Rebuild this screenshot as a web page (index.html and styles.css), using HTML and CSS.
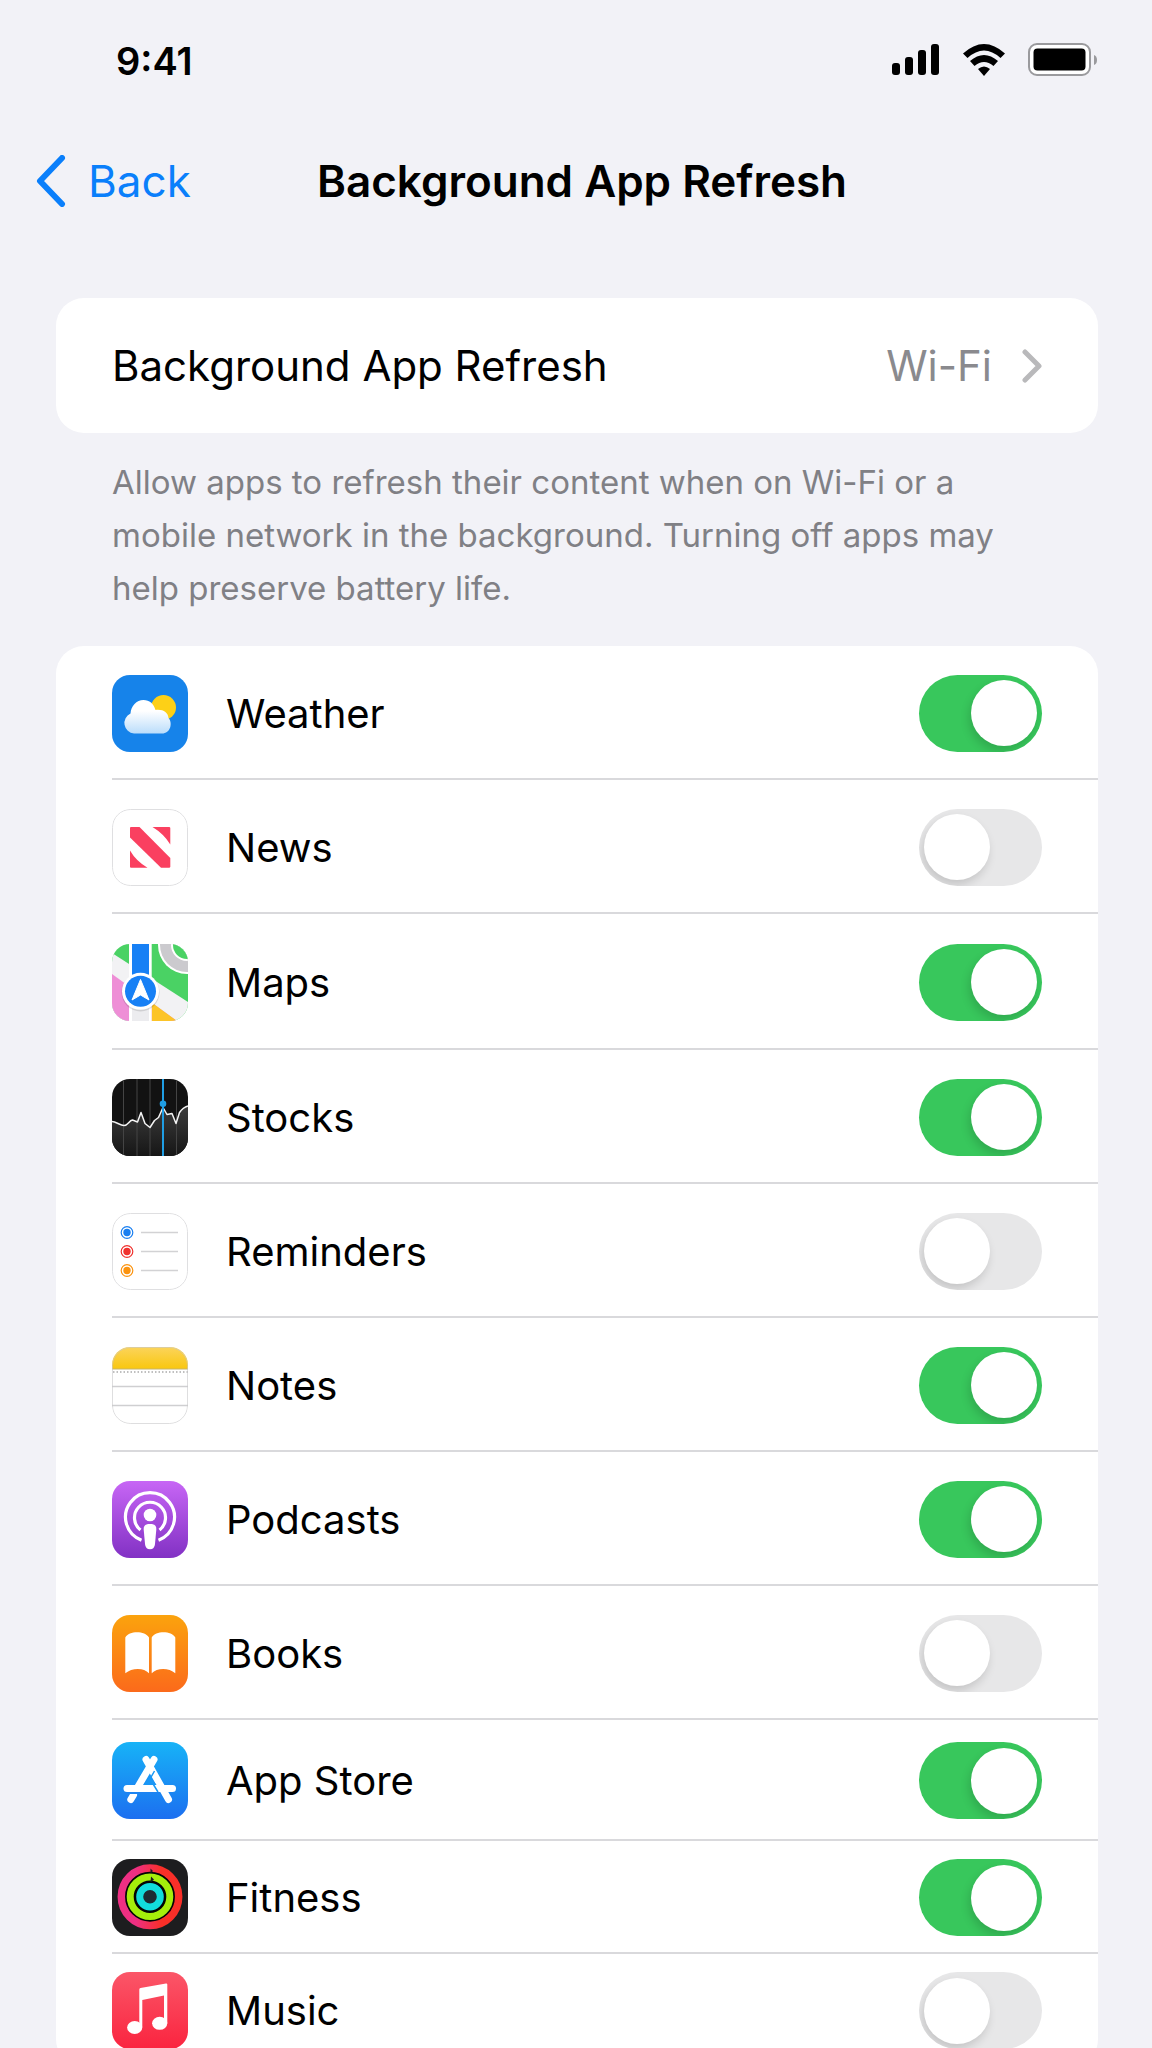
FILE: index.html
```html
<!DOCTYPE html>
<html lang="en">
<head>
<meta charset="utf-8">
<meta name="viewport" content="width=device-width, initial-scale=1">
<title>Background App Refresh</title>
<link rel="stylesheet" href="styles.css">
</head>
<body>
<div class="screen">
  <div class="status">
    <span class="status-time">9:41</span>
    <div class="status-icons">
      <svg width="48" height="32" viewBox="0 0 48 32" aria-hidden="true"><rect x="0" y="19" width="8" height="12" rx="3"/><rect x="13" y="13" width="8" height="18" rx="3"/><rect x="26" y="6" width="8" height="25" rx="3"/><rect x="39" y="0" width="8" height="31" rx="3"/></svg>
      <svg width="42" height="32" viewBox="0 0 42 32" aria-hidden="true"><path d="M0 9.500Q21-9.500 42 9.500L37.500 14Q21-1 4.500 14Z"/><path d="M7 17Q21 5 35 17L30.500 22Q21 14 11.500 22Z"/><path d="M15 25Q21 20 27 25L21 32Z"/></svg>
      <svg width="70" height="34" viewBox="0 0 70 34" aria-hidden="true"><rect x="1" y="1" width="61" height="31" rx="8" fill="#fff" stroke="#9a9a9d" stroke-width="2"/><rect x="5.500" y="5.500" width="52" height="22" rx="4"/><path d="M66 12q3 1 3 5t-3 5z" fill="#9a9a9d"/></svg>
    </div>
  </div>

  <header class="nav">
    <a class="nav-back" href="#">
      <svg width="30" height="52" viewBox="0 0 30 52" aria-hidden="true"><path d="M26 3L4 26 26 49" fill="none" stroke="currentColor" stroke-width="6" stroke-linecap="round" stroke-linejoin="round"/></svg>
      <span>Back</span>
    </a>
    <h1 class="nav-title">Background App Refresh</h1>
  </header>

  <main class="content">
    <section class="card">
      <button class="link-row" type="button">
        <span>Background App Refresh</span>
        <span class="link-value">Wi-Fi</span>
        <svg width="20" height="34" viewBox="0 0 20 34" aria-hidden="true"><path d="M3 3L17 17 3 31" fill="none" stroke="#b9b9bb" stroke-width="5" stroke-linecap="round" stroke-linejoin="round"/></svg>
      </button>
    </section>
    <p class="note">Allow apps to refresh their content when on Wi-Fi or a mobile network in the background. Turning off apps may help preserve battery life.</p>

    <section class="card">
      <label class="row">
        <svg class="app-icon" viewBox="0 0 76 77" aria-hidden="true">
          <defs><linearGradient id="cloud" gradientUnits="userSpaceOnUse" x1="0" y1="36" x2="0" y2="59"><stop offset="0" stop-color="#fff"/><stop offset="1" stop-color="#b9dcfb"/></linearGradient></defs>
          <rect width="76" height="77" fill="#1683ea"/><circle cx="51.500" cy="32.500" r="12.500" fill="#fdd017"/>
          <path fill="url(#cloud)" d="M22 58.500A10.500 10.500 0 0 1 18.500 38.500C19 31 24.500 25 31.500 25 37.500 25 41.500 28.500 43.500 35 51 34 56 37.500 56.500 43 61 48 58.500 58.500 50 58.500Z"/>
        </svg>
        <span class="row-body"><span>Weather</span><input class="switch" type="checkbox" role="switch" checked></span>
      </label>
      <label class="row">
        <svg class="app-icon" viewBox="0 0 76 77" aria-hidden="true">
          <rect x=".5" y=".5" width="75" height="76" rx="18" fill="#fff" stroke="#dfdfe1"/>
          <g fill="#fa4060"><path d="M19 18H27.500L58.300 49V57.500Q58.300 58.700 57 58.700H49L18 28.500V19Q18 18 19 18Z"/><path d="M40.500 18H57Q58.300 18 58.300 19V35.500Q52 25 40.500 18Z"/><path d="M18 41.500V57.500Q18 58.700 19 58.700H35.500Q24 52 18 41.500Z"/></g>
        </svg>
        <span class="row-body"><span>News</span><input class="switch" type="checkbox" role="switch"></span>
      </label>
      <label class="row row-large">
        <svg class="app-icon" viewBox="0 0 76 77" aria-hidden="true">
          <rect width="76" height="77" fill="#4ad264"/>
          <circle cx="75" cy="1" r="29" fill="#fff"/><circle cx="75" cy="1" r="27" fill="#cbcace"/><circle cx="75" cy="1" r="16" fill="#fff"/><circle cx="75" cy="1" r="14" fill="#4ad264"/>
          <path d="M0 9L76 58V77H0Z" fill="#f2f2f4"/><path d="M0 30L65 77H0Z" fill="#ee8ed6"/><path d="M39.700 58.500L65 77H39.700Z" fill="#fcc428"/>
          <path d="M17 0H39.700V77H17Z" fill="#fff"/><path d="M20 50H37V77H20Z" fill="#ececef"/><path d="M20 0H37V40H20Z" fill="#1780f5"/>
          <circle cx="28.500" cy="48.500" r="19" fill="#000" opacity=".12"/><circle cx="28.500" cy="47.300" r="18.500" fill="#fff"/><circle cx="28.500" cy="47.300" r="15.500" fill="#1780f5"/>
          <path d="M28.500 35.500L37 56 28.500 51 20 56Z" fill="#fff" stroke="#fff" stroke-linejoin="round"/>
        </svg>
        <span class="row-body"><span>Maps</span><input class="switch" type="checkbox" role="switch" checked></span>
      </label>
      <label class="row">
        <svg class="app-icon" viewBox="0 0 76 77" aria-hidden="true">
          <defs><linearGradient id="chart" x2="0" y2="1"><stop offset="0" stop-color="#3c3c3c"/><stop offset="1" stop-color="#161616"/></linearGradient></defs>
          <rect width="76" height="77" fill="#121212"/>
          <path d="M0 42.500L12 46.500 20.500 41 25.500 43 29 33.500 33 44.500 38 48.500 42.500 41.500 46.500 38.500 51 28.500 55 35.500 60 34.500 64 44.500 67.500 33.500 76 27V77H0Z" fill="url(#chart)"/>
          <path d="M11.500 0V77M25 0V77M38 0V77M64.500 0V77" stroke="#444"/>
          <path d="M0 42.500C4 42.500 8 46.500 12 46.500S17 41.500 20.500 41L25.500 43 29 33.500 33 44.500 38 48.500 42.500 41.500 46.500 38.500 51 28.500 55 35.500 60 34.500 64 44.500 67.500 33.500Q71 28.500 76 27" fill="none" stroke="#f4f4f4" stroke-width="1.500" stroke-linejoin="round"/>
          <path d="M51 0V77" stroke="#1f9ee4" stroke-width="2"/><circle cx="51" cy="24.700" r="3.300" fill="#1f9ee4"/>
        </svg>
        <span class="row-body"><span>Stocks</span><input class="switch" type="checkbox" role="switch" checked></span>
      </label>
      <label class="row">
        <svg class="app-icon" viewBox="0 0 76 77" aria-hidden="true">
          <rect x=".5" y=".5" width="75" height="76" rx="18" fill="#fff" stroke="#dfdfe1"/>
          <g fill="none" stroke-width="1.200"><circle cx="15" cy="19.500" r="5.800" stroke="#1a7ff0"/><circle cx="15" cy="38.500" r="5.800" stroke="#f0322e"/><circle cx="15" cy="57.500" r="5.800" stroke="#fb930f"/></g>
          <circle cx="15" cy="19.500" r="3.700" fill="#1a7ff0"/><circle cx="15" cy="38.500" r="3.700" fill="#f0322e"/><circle cx="15" cy="57.500" r="3.700" fill="#fb930f"/>
          <path d="M29 19.500H66M29 38.500H66M29 57.500H66" stroke="#d2d2d4" stroke-width="1.500"/>
        </svg>
        <span class="row-body"><span>Reminders</span><input class="switch" type="checkbox" role="switch"></span>
      </label>
      <label class="row">
        <svg class="app-icon" viewBox="0 0 76 77" aria-hidden="true">
          <defs><linearGradient id="pad" x2="0" y2="1"><stop offset="0" stop-color="#fbd45c"/><stop offset="1" stop-color="#f9c70f"/></linearGradient></defs>
          <rect width="76" height="77" fill="#fff"/><rect width="76" height="22" fill="url(#pad)"/>
          <path d="M0 22H76" stroke="#c8b468"/><path d="M1 25H76" stroke="#aaa" stroke-width="1.500" stroke-dasharray="1.500 2"/>
          <path d="M0 39.500H76M0 58.500H76" stroke="#cfcfd1" stroke-width="1.300"/><rect x=".5" y=".5" width="75" height="76" rx="18" fill="none" stroke="#c8c8ca" stroke-opacity=".6"/>
        </svg>
        <span class="row-body"><span>Notes</span><input class="switch" type="checkbox" role="switch" checked></span>
      </label>
      <label class="row">
        <svg class="app-icon" viewBox="0 0 76 77" aria-hidden="true">
          <defs><linearGradient id="podcast" x2="0" y2="1"><stop offset="0" stop-color="#c766f5"/><stop offset="1" stop-color="#8231c4"/></linearGradient></defs>
          <rect width="76" height="77" fill="url(#podcast)"/>
          <g fill="none" stroke="#fff" stroke-width="3.200"><path d="M29.500 59.200A24.500 24.500 0 1 1 46.500 59.200"/><path d="M28.500 49A15.500 15.500 0 1 1 47.500 49"/></g>
          <circle cx="38" cy="34" r="6.300" fill="#fff"/><path d="M38 43C42.500 43 44.500 44.500 44.300 48.500L43 63Q42.500 68.300 38 68.300T33 63L31.700 48.500C31.500 44.500 33.500 43 38 43Z" fill="#fff"/>
        </svg>
        <span class="row-body"><span>Podcasts</span><input class="switch" type="checkbox" role="switch" checked></span>
      </label>
      <label class="row">
        <svg class="app-icon" viewBox="0 0 76 77" aria-hidden="true">
          <defs><linearGradient id="book" x2="0" y2="1"><stop offset="0" stop-color="#fba30d"/><stop offset="1" stop-color="#fb6a1b"/></linearGradient></defs>
          <rect width="76" height="77" fill="url(#book)"/>
          <path d="M13.300 22.500C17 15.500 33 15.500 37 22.500V58.300C32 52.500 20 52.500 13.300 58.300ZM39.700 22.500C43.500 15.500 59.500 15.500 63.300 22.500V58.300C57 52.500 45 52.500 39.700 58.300Z" fill="#fff"/>
        </svg>
        <span class="row-body"><span>Books</span><input class="switch" type="checkbox" role="switch"></span>
      </label>
      <label class="row row-medium">
        <svg class="app-icon" viewBox="0 0 76 77" aria-hidden="true">
          <defs><linearGradient id="store" x2="0" y2="1"><stop offset="0" stop-color="#17b3f7"/><stop offset="1" stop-color="#1c6ff0"/></linearGradient></defs>
          <rect width="76" height="77" fill="url(#store)"/>
          <g fill="none" stroke="#fff" stroke-width="7" stroke-linecap="round"><path d="M15 46.500H60.500"/><path d="M34 17.500L56.500 57.500"/></g>
          <path d="M42.500 29L38 37 46 50" fill="none" stroke="#1a99f5" stroke-width="1.500"/>
          <path d="M38 35L44.500 43H31Z" fill="#1a97f5"/>
          <path d="M42 17.500L25.500 45.500M21.500 53L18.800 57.500" fill="none" stroke="#fff" stroke-width="7" stroke-linecap="round"/>
          <path d="M13 51H48" stroke="#1c84f2" stroke-width="2"/>
        </svg>
        <span class="row-body"><span>App Store</span><input class="switch" type="checkbox" role="switch" checked></span>
      </label>
      <label class="row row-small">
        <svg class="app-icon" viewBox="0 0 76 77" aria-hidden="true">
          <defs><linearGradient id="move"><stop offset=".25" stop-color="#ee2f83"/><stop offset=".7" stop-color="#f92f28"/></linearGradient></defs>
          <rect width="76" height="77" fill="#1d1d1f"/><circle cx="38" cy="37.700" r="32" fill="#050505"/><circle cx="38" cy="37.700" r="8" fill="#1d2b33"/>
          <g fill="none"><circle cx="38" cy="37.700" r="28.700" stroke="url(#move)" stroke-width="7.500"/><circle cx="38" cy="37.700" r="19.800" stroke="#a5ee0b" stroke-width="7"/><circle cx="38" cy="37.700" r="10.300" stroke="#12dcdc" stroke-width="7"/></g>
          <path d="M38.500 14.500L41 12 38.500 9.500ZM38.500 23.500L42 20.500 39 17.500Z" fill="#1d1d1f"/>
        </svg>
        <span class="row-body"><span>Fitness</span><input class="switch" type="checkbox" role="switch" checked></span>
      </label>
      <label class="row row-small">
        <svg class="app-icon" viewBox="0 0 76 77" aria-hidden="true">
          <defs><linearGradient id="music" x2="0" y2="1"><stop offset="0" stop-color="#fb5668"/><stop offset="1" stop-color="#fa243f"/></linearGradient></defs>
          <rect width="76" height="77" fill="url(#music)"/>
          <path d="M27.300 17.500Q27.300 16.300 28.500 16L54 11.500Q55.300 11.300 55.300 12.500V51H52V23.500L30.300 28V55H27.300Z" fill="#fff"/><ellipse cx="22.700" cy="55.500" rx="7.600" ry="6.500" fill="#fff"/><ellipse cx="47.700" cy="51.300" rx="7.600" ry="6.500" fill="#fff"/>
        </svg>
        <span class="row-body"><span>Music</span><input class="switch" type="checkbox" role="switch"></span>
      </label>
    </section>
  </main>
</div>
</body>
</html>
```

FILE: styles.css
```css
* { box-sizing: border-box; }

body {
  margin: 0;
  background: #f2f2f7;
  color: #000;
  font-family: Inter, "Liberation Sans", sans-serif;
  font-size: 42px;
}

.screen {
  height: 100vh;
  overflow-y: auto;
  scrollbar-width: none;
}

.status {
  display: flex;
  justify-content: space-between;
  align-items: center;
  height: 120px;
  padding: 0 54px 0 116px;
}

.status-time {
  padding-top: 2px;
  font-size: 38px;
  font-weight: 600;
}

.status-icons {
  display: flex;
  align-items: center;
  gap: 23px;
}

.nav {
  display: grid;
  grid-template-columns: 1fr auto 1fr;
  align-items: center;
  height: 122px;
  padding: 0 24px 0 36px;
  font-size: 44px;
}

.nav-back {
  display: flex;
  align-items: center;
  gap: 22px;
  color: #0a7ffb;
  text-decoration: none;
}

.nav-title {
  margin: 0;
  font-size: 44px;
  font-weight: 600;
}

.content { padding: 56px 54px 0 56px; }

.card {
  overflow: hidden;
  border-radius: 28px;
  background: #fff;
}

.link-row {
  display: flex;
  align-items: center;
  gap: 30px;
  width: 100%;
  height: 135px;
  padding: 0 56px;
  border: 0;
  background: none;
  color: inherit;
  font: inherit;
  text-align: left;
}

.link-value {
  margin-left: auto;
  color: #8a8a8e;
}

.note {
  margin: 0;
  padding: 23px 56px 31px;
  color: #808085;
  font-size: 33px;
  line-height: 53px;
}

.row {
  display: flex;
  align-items: center;
  gap: 38px;
  height: 134px;
  padding-left: 56px;
  background: linear-gradient(#d9d9dc, #d9d9dc) 56px 100% / 100% 2px no-repeat;
  font-size: 40px;
}

.row-large { height: 136px; }
.row-medium { height: 121px; }
.row-small { height: 113px; }

.app-icon {
  flex: none;
  width: 76px;
  height: 77px;
  border-radius: 18px;
}

.row-body {
  display: flex;
  flex: 1;
  align-items: center;
  justify-content: space-between;
  padding-right: 56px;
}

.switch {
  display: flex;
  align-items: center;
  flex: none;
  width: 123px;
  height: 77px;
  margin: 0;
  padding: 0 5px;
  overflow: hidden;
  border-radius: 39px;
  background: #e7e7e8;
  appearance: none;
}

.switch::before {
  content: "";
  width: 66px;
  height: 66px;
  border-radius: 50%;
  background: #fff;
  box-shadow: -2px 5px 10px rgba(0, 0, 0, .15);
}

.switch:checked {
  justify-content: flex-end;
  background: #38c75c;
}
```
